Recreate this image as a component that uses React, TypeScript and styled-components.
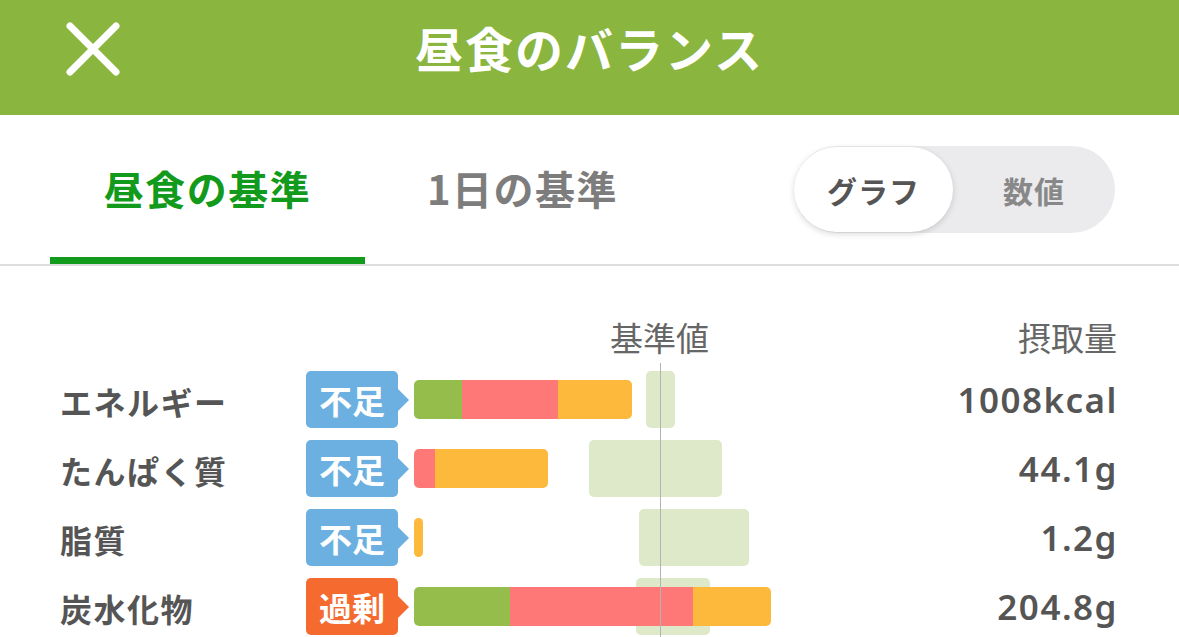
import React from "react";
import styled, { createGlobalStyle } from "styled-components";

const GlobalStyle = createGlobalStyle`
  html, body {
    margin: 0;
    padding: 0;
    background: #ffffff;
    font-family: "Noto Sans CJK JP", "Noto Sans", sans-serif;
    overflow: hidden;
  }
`;

type Segment = { color: string; width: number };
type Row = {
  label: string;
  status: "short" | "over";
  segments: Segment[];
  refLeft: number;
  refWidth: number;
  value: string;
};

const GREEN = "#95bd4b";
const RED = "#ff7878";
const YELLOW = "#fdb93b";

const rows: Row[] = [
  {
    label: "エネルギー",
    status: "short",
    segments: [
      { color: GREEN, width: 48 },
      { color: RED, width: 96 },
      { color: YELLOW, width: 74 },
    ],
    refLeft: 232,
    refWidth: 29,
    value: "1008kcal",
  },
  {
    label: "たんぱく質",
    status: "short",
    segments: [
      { color: RED, width: 21 },
      { color: YELLOW, width: 113 },
    ],
    refLeft: 175,
    refWidth: 133,
    value: "44.1g",
  },
  {
    label: "脂質",
    status: "short",
    segments: [{ color: YELLOW, width: 9 }],
    refLeft: 225,
    refWidth: 110,
    value: "1.2g",
  },
  {
    label: "炭水化物",
    status: "over",
    segments: [
      { color: GREEN, width: 96 },
      { color: RED, width: 183 },
      { color: YELLOW, width: 78 },
    ],
    refLeft: 222,
    refWidth: 74,
    value: "204.8g",
  },
];

const App = () => {
  return (
    <Page>
      <GlobalStyle />
      <Header>
        <CloseButton aria-label="close">
          <svg width="56" height="56" viewBox="0 0 56 56">
            <path
              d="M5 5 L51 51 M51 5 L5 51"
              stroke="#ffffff"
              strokeWidth="7"
              strokeLinecap="round"
            />
          </svg>
        </CloseButton>
        <Title>昼食のバランス</Title>
        <span />
      </Header>

      <TabBar>
        <Tab active>昼食の基準</Tab>
        <Tab>1日の基準</Tab>
        <Toggle>
          <ToggleOption active>グラフ</ToggleOption>
          <ToggleOption>数値</ToggleOption>
        </Toggle>
      </TabBar>

      <Table>
        <HeadRow>
          <span />
          <span />
          <RefHead>基準値</RefHead>
          <AmountHead>摂取量</AmountHead>
        </HeadRow>
        <Body>
          <RefLine />
          {rows.map((row) => (
            <DataRow key={row.label}>
              <Label>{row.label}</Label>
              <Badge status={row.status}>
                {row.status === "short" ? "不足" : "過剰"}
              </Badge>
              <Chart>
                <RefBox style={{ left: row.refLeft, width: row.refWidth }} />
                <Bar>
                  {row.segments.map((s, i) => (
                    <Seg key={i} style={{ background: s.color, width: s.width }} />
                  ))}
                </Bar>
              </Chart>
              <Value>{row.value}</Value>
            </DataRow>
          ))}
        </Body>
      </Table>
    </Page>
  );
};

export default App;

const Page = styled.div`
  width: 1179px;
  height: 637px;
  overflow: hidden;
  background: #ffffff;
`;

const Header = styled.header`
  height: 115px;
  box-sizing: border-box;
  padding: 0 0 17px 0;
  background: #8ab63f;
  display: grid;
  grid-template-columns: 1fr auto 1fr;
  align-items: center;
`;

const CloseButton = styled.div`
  padding-left: 65px;
  display: flex;
  align-items: center;
  height: 56px;
`;

const Title = styled.h1`
  margin: 0;
  color: #ffffff;
  font-size: 48px;
  font-weight: 700;
  letter-spacing: 2px;
  line-height: 1;
  padding-bottom: 4px;
`;

const TabBar = styled.nav`
  height: 151px;
  box-sizing: border-box;
  padding: 0 64px 0 50px;
  display: flex;
  align-items: stretch;
  border-bottom: 2px solid #dddddd;
`;

const Tab = styled.div<{ active?: boolean }>`
  width: 315px;
  display: flex;
  align-items: center;
  justify-content: center;
  padding-top: 3px;
  font-size: 40px;
  font-weight: 700;
  letter-spacing: 1.5px;
  color: ${(p) => (p.active ? "#119a1b" : "#7d7d7d")};
  border-bottom: 7px solid ${(p) => (p.active ? "#119a1b" : "transparent")};
`;

const Toggle = styled.div`
  margin-left: auto;
  align-self: flex-start;
  margin-top: 31px;
  width: 321px;
  height: 87px;
  border-radius: 44px;
  background: #ebebee;
  display: flex;
  align-items: stretch;
`;

const ToggleOption = styled.div<{ active?: boolean }>`
  flex: 1;
  display: flex;
  align-items: center;
  justify-content: center;
  border-radius: 44px;
  font-size: 30px;
  font-weight: 700;
  letter-spacing: 1px;
  color: ${(p) => (p.active ? "#555555" : "#888888")};
  background: ${(p) => (p.active ? "#ffffff" : "transparent")};
  box-shadow: ${(p) => (p.active ? "0 2px 6px rgba(0,0,0,0.15)" : "none")};
  ${(p) => (p.active ? "flex: 0 0 159px; margin: 1px 0;" : "")}
`;

const Table = styled.section`
  padding: 0 62px 0 60px;
`;

const grid = `
  display: grid;
  grid-template-columns: 246px 108px 1fr auto;
  align-items: center;
`;

const HeadRow = styled.div`
  ${grid}
  height: 99px;
  align-items: end;
  padding-bottom: 11px;
  box-sizing: border-box;
  font-size: 33px;
  color: #666666;
`;

const RefHead = styled.span`
  margin-left: 196px;
  line-height: 1;
`;

const AmountHead = styled.span`
  text-align: right;
  line-height: 1;
`;

const Body = styled.div`
  position: relative;
`;

const RefLine = styled.div`
  position: absolute;
  left: 600px;
  top: -2px;
  bottom: -20px;
  width: 1px;
  background: #b3b3b3;
  z-index: 2;
`;

const DataRow = styled.div`
  ${grid}
  height: 69px;
`;

const Label = styled.span`
  font-size: 32px;
  font-weight: 700;
  letter-spacing: 1.5px;
  color: #555555;
  padding-top: 2px;
`;

const Badge = styled.span<{ status: "short" | "over" }>`
  position: relative;
  width: 92px;
  height: 57px;
  box-sizing: border-box;
  border-radius: 5px;
  background: ${(p) => (p.status === "short" ? "#6bb0e1" : "#f46a2f")};
  color: #ffffff;
  font-size: 33px;
  font-weight: 700;
  display: flex;
  align-items: center;
  justify-content: center;
  &::after {
    content: "";
    position: absolute;
    right: -11px;
    top: 50%;
    transform: translateY(-50%);
    border-top: 11px solid transparent;
    border-bottom: 11px solid transparent;
    border-left: 11px solid
      ${(p) => (p.status === "short" ? "#6bb0e1" : "#f46a2f")};
  }
`;

const Chart = styled.div`
  position: relative;
  height: 57px;
  display: flex;
  align-items: center;
`;

const RefBox = styled.div`
  position: absolute;
  top: 0;
  height: 57px;
  border-radius: 5px;
  background: #dde9c9;
`;

const Bar = styled.div`
  position: relative;
  display: flex;
  height: 39px;
  border-radius: 5px;
  overflow: hidden;
`;

const Seg = styled.div`
  height: 100%;
`;

const Value = styled.span`
  text-align: right;
  font-size: 35px;
  font-weight: 600;
  letter-spacing: 1.5px;
  margin-right: -1px;
  color: #555555;
  font-family: "Noto Sans", "Noto Sans CJK JP", sans-serif;
`;
